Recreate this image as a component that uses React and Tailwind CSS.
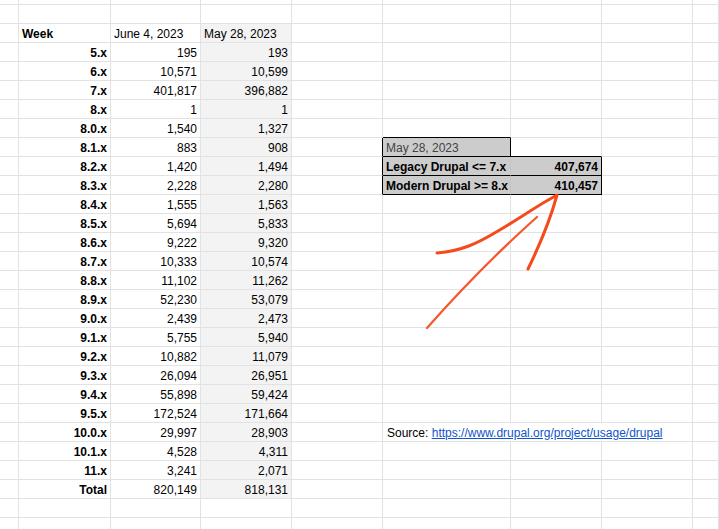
import React from 'react';

const rows = [
  ['5.x', '195', '193'],
  ['6.x', '10,571', '10,599'],
  ['7.x', '401,817', '396,882'],
  ['8.x', '1', '1'],
  ['8.0.x', '1,540', '1,327'],
  ['8.1.x', '883', '908'],
  ['8.2.x', '1,420', '1,494'],
  ['8.3.x', '2,228', '2,280'],
  ['8.4.x', '1,555', '1,563'],
  ['8.5.x', '5,694', '5,833'],
  ['8.6.x', '9,222', '9,320'],
  ['8.7.x', '10,333', '10,574'],
  ['8.8.x', '11,102', '11,262'],
  ['8.9.x', '52,230', '53,079'],
  ['9.0.x', '2,439', '2,473'],
  ['9.1.x', '5,755', '5,940'],
  ['9.2.x', '10,882', '11,079'],
  ['9.3.x', '26,094', '26,951'],
  ['9.4.x', '55,898', '59,424'],
  ['9.5.x', '172,524', '171,664'],
  ['10.0.x', '29,997', '28,903'],
  ['10.1.x', '4,528', '4,311'],
  ['11.x', '3,241', '2,071'],
  ['Total', '820,149', '818,131'],
];

const ROW_COUNT = 28;
const GRID = 'border-r border-b border-[#e2e2e2]';

// cells of the summary box get black edges
const boxBorders = {
  '6-5': 'border-r border-b border-r-[#e2e2e2] border-b-black',
  '7-4': 'border-r border-b border-r-black border-b-[#e2e2e2]',
  '7-5': 'border-r border-b border-black bg-[#cccccc]',
  '7-6': 'border-r border-b border-r-[#e2e2e2] border-b-black',
  '8-4': 'border-r border-b border-r-black border-b-[#e2e2e2]',
  '8-5': 'border-r border-b border-r-[#c4c4c4] border-b-black bg-[#cccccc]',
  '8-6': 'border-r border-b border-black bg-[#cccccc]',
  '9-4': 'border-r border-b border-r-black border-b-[#e2e2e2]',
  '9-5': 'border-r border-b border-r-[#c4c4c4] border-b-black bg-[#cccccc]',
  '9-6': 'border-r border-b border-black bg-[#cccccc]',
};

const Cell = ({ r, c, className = '', children }) => {
  const border = boxBorders[`${r}-${c}`] || GRID;
  const shade = c === 3 && r >= 1 && r <= 25 ? 'bg-[#f3f3f3]' : '';
  return (
    <div className={`${border} ${shade} flex items-center pt-[1px] px-[3px] whitespace-nowrap ${className}`}>
      {children}
    </div>
  );
};

const rowCells = (r) => {
  if (r === 1) {
    return [
      <Cell key="0" r={r} c={0} />,
      <Cell key="1" r={r} c={1} className="font-bold">Week</Cell>,
      <Cell key="2" r={r} c={2}>June 4, 2023</Cell>,
      <Cell key="3" r={r} c={3}>May 28, 2023</Cell>,
      ...[4, 5, 6, 7, 8].map((c) => <Cell key={c} r={r} c={c} />),
    ];
  }

  const d = rows[r - 2];
  let extra = [4, 5, 6, 7, 8].map((c) => <Cell key={c} r={r} c={c} />);

  if (r === 7) {
    extra = [
      <Cell key="4" r={r} c={4} />,
      <Cell key="5" r={r} c={5} className="text-[#434343]">May 28, 2023</Cell>,
      ...[6, 7, 8].map((c) => <Cell key={c} r={r} c={c} />),
    ];
  }
  if (r === 8 || r === 9) {
    extra = [
      <Cell key="4" r={r} c={4} />,
      <Cell key="5" r={r} c={5} className="font-bold">
        {r === 8 ? 'Legacy Drupal <= 7.x' : 'Modern Drupal >= 8.x'}
      </Cell>,
      <Cell key="6" r={r} c={6} className="font-bold justify-end">
        {r === 8 ? '407,674' : '410,457'}
      </Cell>,
      ...[7, 8].map((c) => <Cell key={c} r={r} c={c} />),
    ];
  }
  if (r === 22) {
    extra = [
      <Cell key="4" r={r} c={4} />,
      <div key="src" className={`${GRID} col-span-3 flex items-center pt-[1px] px-[4px] whitespace-nowrap`}>
        Source:&nbsp;
        <a href="#" className="text-[#1155cc] underline">https://www.drupal.org/project/usage/drupal</a>
      </div>,
      <Cell key="8" r={r} c={8} />,
    ];
  }

  return [
    <Cell key="0" r={r} c={0} />,
    <Cell key="1" r={r} c={1} className="font-bold justify-end">{d && d[0]}</Cell>,
    <Cell key="2" r={r} c={2} className="justify-end">{d && d[1]}</Cell>,
    <Cell key="3" r={r} c={3} className="justify-end">{d && d[2]}</Cell>,
    ...extra,
  ];
};

const Arrows = () => (
  <svg className="pointer-events-none absolute left-0 top-0" width="719" height="529" viewBox="0 0 719 529">
    <path
      d="M437 253 C462 251 478 243 498 231 C520 218 540 204 557 195 Q548 228 528 269"
      fill="none"
      stroke="#f44a1c"
      strokeWidth="3"
      strokeLinecap="round"
      strokeLinejoin="round"
    />
    <path
      d="M537 217 Q480 268 427 328"
      fill="none"
      stroke="#f5572a"
      strokeWidth="2.2"
      strokeLinecap="round"
    />
  </svg>
);

export default function App() {
  return (
    <div className="relative h-[529px] w-[719px] overflow-hidden bg-white font-['Liberation_Sans',Arial,sans-serif] text-[12px] text-black">
      <div className="grid grid-cols-[19px_92px_90px_91px_91px_128px_91px_91px_1fr] grid-rows-[5px_repeat(28,19px)]">
        {Array.from({ length: 9 }).map((_, c) => (
          <div key={`top-${c}`} className={GRID} />
        ))}
        {Array.from({ length: ROW_COUNT }).map((_, r) => {
          if (r === 0) {
            return [0, 1, 2, 3, 4, 5, 6, 7, 8].map((c) => <Cell key={`0-${c}`} r={0} c={c} />);
          }
          return <React.Fragment key={r}>{rowCells(r)}</React.Fragment>;
        })}
      </div>
      <Arrows />
    </div>
  );
}
